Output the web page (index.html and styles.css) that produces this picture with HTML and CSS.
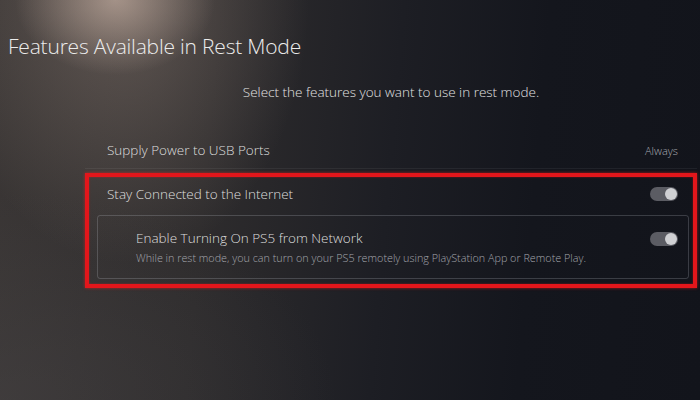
FILE: index.html
```html
<!DOCTYPE html>
<html lang="en">
<head>
    <meta charset="UTF-8">
    <title>Features Available in Rest Mode</title>
    <link rel="stylesheet" href="styles.css">
</head>
<body>

    <div class="screen">
        <h1 class="page-title">Features Available in Rest Mode</h1>

        <div class="settings">
            <p class="intro">Select the features you want to use in rest mode.</p>

            <div class="row row-usb">
                <span class="row-label">Supply Power to USB Ports</span>
                <span class="row-value">Always</span>
            </div>

            <div class="highlight">
                <div class="row row-internet">
                    <span class="row-label">Stay Connected to the Internet</span>
                    <span class="toggle on"></span>
                </div>

                <div class="sub-group">
                    <div class="sub-row">
                        <div class="sub-text">
                            <span class="row-label">Enable Turning On PS5 from Network</span>
                            <span class="row-desc">While in rest mode, you can turn on your PS5 remotely using PlayStation App or Remote Play.</span>
                        </div>
                        <span class="toggle on"></span>
                    </div>
                </div>
            </div>
        </div>
    </div>

</body>
</html>
```

FILE: styles.css
```css
/* Page */
body {
    margin: 0;
    font-family: 'Open Sans', 'Noto Sans', sans-serif;
    background: #13151c;
}

.screen {
    width: 700px;
    height: 400px;
    overflow: hidden;
    background:
        radial-gradient(ellipse 100px 75px at 115px 0, rgba(220, 195, 180, 0.55), transparent),
        radial-gradient(ellipse 230px 330px at 125px 0, rgba(170, 150, 138, 0.38), transparent 80%),
        radial-gradient(ellipse 420px 260px at 0 400px, rgba(75, 72, 74, 0.38), transparent 80%),
        linear-gradient(95deg, #3a3635 0%, #2e2c2d 30%, #1d1e24 55%, #14161d 75%, #12141b 100%);
    color: #e6e6e6;
}

/* Title */
.page-title {
    margin: 0;
    padding: 32px 0 0 8px;
    font-size: 21px;
    font-weight: 300;
    line-height: 28px;
    color: #ececec;
    letter-spacing: -0.2px;
}

/* Settings list */
.settings {
    margin-left: 85px;
    width: 612px;
}

.intro {
    margin: 22px 0 0;
    text-align: center;
    font-size: 13.5px;
    line-height: 20px;
    font-weight: 300;
    color: #e2e2e2;
}

.row {
    display: flex;
    justify-content: space-between;
    align-items: center;
}

.row-label {
    font-size: 13.5px;
    font-weight: 300;
    color: #dedede;
}

.row-usb {
    height: 36px;
    margin-top: 30px;
    padding: 0 19px 0 22px;
    border-bottom: 1px solid rgba(255, 255, 255, 0.06);
}

.row-value {
    font-size: 11px;
    font-weight: 300;
    color: #a9abb2;
}

/* Red highlight frame */
.highlight {
    margin-top: 4px;
    height: 107px;
    border: 4px solid #e3161b;
    box-shadow: 0 0 3px rgba(255, 30, 30, 0.6), inset 0 0 2px rgba(255, 30, 30, 0.5);
}

.row-internet {
    height: 30px;
    padding: 2px 15px 0 18px;
}

/* Nested group */
.sub-group {
    margin: 6px 4px 0 8px;
    height: 62px;
    border: 1px solid rgba(200, 205, 215, 0.22);
    border-radius: 3px;
}

.sub-row {
    display: flex;
    justify-content: space-between;
    align-items: flex-start;
    padding: 13px 10px 0 38px;
}

.sub-text {
    display: flex;
    flex-direction: column;
}

.row-desc {
    margin-top: 3px;
    font-size: 10.8px;
    font-weight: 300;
    color: #a3a5ac;
}

/* Toggle switch */
.toggle {
    position: relative;
    width: 28px;
    height: 14px;
    border-radius: 7px;
    background: #5b5c63;
    flex-shrink: 0;
}

.sub-row .toggle {
    margin-top: 3px;
}

.toggle.on::after {
    content: "";
    position: absolute;
    top: 1px;
    right: 1px;
    width: 12px;
    height: 12px;
    border-radius: 50%;
    background: #cfd0d3;
}
```
